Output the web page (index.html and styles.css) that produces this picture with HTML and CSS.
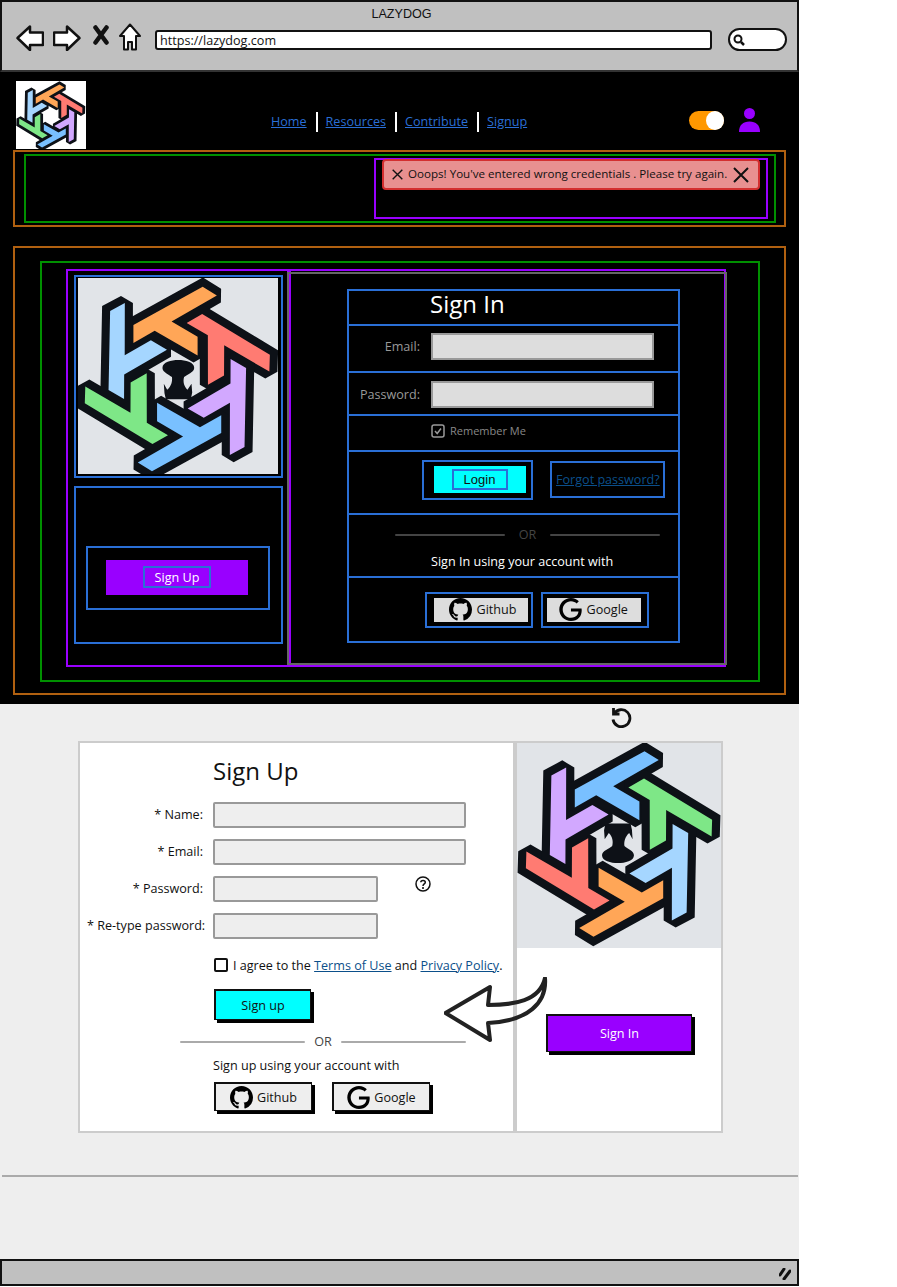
FILE: index.html
```html
<!DOCTYPE html>
<html lang="en">

<head>
    <meta charset="UTF-8">
    <meta name="viewport" content="width=device-width, initial-scale=1.0">
    <title>LAZYDOG</title>
    <link rel="stylesheet" href="styles.css">
</head>

<body>
    <svg class="defs" aria-hidden="true">
        <defs>
            <polygon id="arm" points="-130,-160 75,-273 117,-247 -17,-170 60,-125 60,-70 -67,-143 -130,-107" />
            <symbol id="arms" viewBox="-320 -320 640 640">
                <g fill="#0d1117" stroke="#0d1117" stroke-width="48" stroke-linejoin="miter" stroke-miterlimit="1.9">
                    <use href="#arm" />
                    <use href="#arm" transform="rotate(60)" />
                    <use href="#arm" transform="rotate(120)" />
                    <use href="#arm" transform="rotate(180)" />
                    <use href="#arm" transform="rotate(240)" />
                    <use href="#arm" transform="rotate(300)" />
                </g>
                <use href="#arm" fill="#ffa657" />
                <use href="#arm" fill="#ff7b72" transform="rotate(60)" />
                <use href="#arm" fill="#d2a8ff" transform="rotate(120)" />
                <use href="#arm" fill="#79c0ff" transform="rotate(180)" />
                <use href="#arm" fill="#7ee787" transform="rotate(240)" />
                <use href="#arm" fill="#a5d6ff" transform="rotate(300)" />
            </symbol>
            <symbol id="logo" viewBox="-320 -320 640 640">
                <path fill="#0d1117" d="M-44 -33C-44 -50 -18 -56 3 -56C24 -56 50 -50 50 -33C50 -20 28 -14 20 -6C16 8 20 22 30 32L42 14L44 40L40 60L-34 60L-38 42L-40 14L-30 32C-18 22 -14 6 -16 -6C-24 -14 -44 -20 -44 -33Z" />
                <use href="#arms" x="-320" y="-320" width="640" height="640" />
            </symbol>
            <symbol id="github" viewBox="0 0 16 16">
                <path d="M8 0C3.58 0 0 3.58 0 8c0 3.54 2.29 6.53 5.47 7.59.4.07.55-.17.55-.38 0-.19-.01-.82-.01-1.49-2.01.37-2.53-.49-2.69-.94-.09-.23-.48-.94-.82-1.13-.28-.15-.68-.52-.01-.53.63-.01 1.08.58 1.23.82.72 1.21 1.87.87 2.33.66.07-.52.28-.87.51-1.07-1.78-.2-3.64-.89-3.64-3.95 0-.87.31-1.59.82-2.15-.08-.2-.36-1.02.08-2.12 0 0 .67-.21 2.2.82.64-.18 1.32-.27 2-.27.68 0 1.36.09 2 .27 1.53-1.04 2.2-.82 2.2-.82.44 1.1.16 1.92.08 2.12.51.56.82 1.27.82 2.15 0 3.07-1.87 3.75-3.65 3.95.29.25.54.73.54 1.48 0 1.07-.01 1.93-.01 2.2 0 .21.15.46.55.38A8.013 8.013 0 0016 8c0-4.42-3.58-8-8-8z" />
            </symbol>
            <symbol id="google" viewBox="0 0 24 24">
                <path d="M12.48 10.92v3.28h7.84c-.24 1.84-.853 3.187-1.787 4.133-1.147 1.147-2.933 2.4-6.053 2.4-4.827 0-8.6-3.893-8.6-8.72s3.773-8.72 8.6-8.72c2.6 0 4.507 1.027 5.907 2.347l2.307-2.307C18.747 1.44 16.133 0 12.48 0 5.867 0 .307 5.387.307 12s5.56 12 12.173 12c3.573 0 6.267-1.173 8.373-3.36 2.16-2.16 2.84-5.213 2.84-7.667 0-.76-.053-1.467-.173-2.053H12.48z" />
            </symbol>
            <symbol id="cross" viewBox="0 0 16 16">
                <path d="M1 1L15 15M15 1L1 15" fill="none" stroke="#111" stroke-width="2" />
            </symbol>
        </defs>
    </svg>

    <div class="page">
        <div class="topbar">
            <div class="window-title">LAZYDOG</div>
            <div class="toolbar">
                <svg class="tool tool-back" viewBox="0 0 28 26"><path d="M1.500 13L14 1.500V7.500H27V20H14V25Z" fill="#fff" stroke="#111" stroke-width="2.500" stroke-linejoin="round" /></svg>
                <svg class="tool tool-forward" viewBox="0 0 28 26"><path d="M26.500 13L14 1.500V7.500H1V20H14V25Z" fill="#fff" stroke="#111" stroke-width="2.500" stroke-linejoin="round" /></svg>
                <svg class="tool tool-stop" viewBox="0 0 16 20"><path d="M2.500 2.500L13.500 17.500M13.500 2.500L2.500 17.500" fill="none" stroke="#111" stroke-width="4.500" stroke-linecap="round" /></svg>
                <svg class="tool tool-home" viewBox="0 0 22 28"><path d="M11 1.500L21 13H17V26.500H13V19H9V26.500H5V13H1Z" fill="#fff" stroke="#111" stroke-width="2" stroke-linejoin="round" /></svg>
                <div class="urlbar">https://lazydog.com</div>
                <div class="searchbox">
                    <svg class="search-icon" viewBox="0 0 12 12"><circle cx="5" cy="5" r="3.500" fill="none" stroke="#111" stroke-width="2" /><path d="M8 8L11 11" stroke="#111" stroke-width="2.500" /></svg>
                </div>
            </div>
        </div>

        <div class="dark">
            <header class="site-header">
                <svg class="site-logo" viewBox="-298 -303 600 588"><use href="#arms" x="-320" y="-320" width="640" height="640" /></svg>
                <nav class="site-nav">
                    <a href="#">Home</a>
                    <a href="#">Resources</a>
                    <a href="#">Contribute</a>
                    <a href="#">Signup</a>
                </nav>
                <div class="toggle"><span class="knob"></span></div>
                <svg class="user-icon" viewBox="0 0 21 24">
                    <circle cx="10.500" cy="5.500" r="5.500" />
                    <path d="M0 24C0 17 4 13.500 10.500 13.500S21 17 21 24Z" />
                </svg>
            </header>

            <section class="box-orange banner">
                <div class="box-green banner-inner">
                    <div class="box-purple banner-col">
                        <div class="alert">
                            <svg class="alert-x"><use href="#cross" /></svg>
                            <span class="alert-text">Ooops! You've entered wrong credentials . Please try again.</span>
                            <svg class="alert-close"><use href="#cross" /></svg>
                        </div>
                    </div>
                </div>
            </section>

            <section class="box-orange main-box">
                <div class="box-green main-inner">
                    <div class="auth-grid">
                        <div class="box-purple auth-left">
                            <div class="box-blue logo-frame">
                                <svg class="big-logo" viewBox="-294 -299 592 580"><use href="#logo" x="-320" y="-320" width="640" height="640" /></svg>
                            </div>
                            <div class="box-blue cta-outer">
                                <div class="box-blue cta-inner">
                                    <div class="cta-btn"><span class="box-blue cta-label">Sign Up</span></div>
                                </div>
                            </div>
                        </div>
                        <div class="box-purple auth-right">
                            <div class="box-blue signin">
                                <div class="si-row si-title">Sign In</div>
                                <div class="si-row si-email">
                                    <label class="si-label">Email:</label>
                                    <div class="si-input"></div>
                                </div>
                                <div class="si-row si-pass">
                                    <label class="si-label">Password:</label>
                                    <div class="si-input"></div>
                                </div>
                                <div class="si-row si-remember">
                                    <svg class="si-check" viewBox="0 0 14 14">
                                        <rect x="1" y="1" width="12" height="12" rx="2" fill="none" stroke="#999" stroke-width="1.500" />
                                        <path d="M4 7L6.200 9.500L10 4.500" fill="none" stroke="#999" stroke-width="1.500" />
                                    </svg>
                                    <span>Remember Me</span>
                                </div>
                                <div class="si-row si-actions">
                                    <div class="box-blue login-box">
                                        <div class="login-btn"><span class="box-blue login-label">Login</span></div>
                                    </div>
                                    <div class="box-blue forgot-box"><a href="#">Forgot password?</a></div>
                                </div>
                                <div class="si-row si-alt">
                                    <div class="or-line si-or"><span>OR</span></div>
                                    <div class="si-using">Sign In using your account with</div>
                                </div>
                                <div class="si-row si-social">
                                    <div class="box-blue social-box">
                                        <div class="social-btn social-github"><svg class="social-icon"><use href="#github" /></svg>Github</div>
                                    </div>
                                    <div class="box-blue social-box">
                                        <div class="social-btn social-google"><svg class="social-icon"><use href="#google" /></svg>Google</div>
                                    </div>
                                </div>
                            </div>
                        </div>
                    </div>
                </div>
            </section>
        </div>

        <div class="light">
            <div class="undo-row">
                <svg class="undo-icon" viewBox="0 0 24 24"><path d="M5.500 4V10H11.500M6 10A8.500 8.500 0 1 1 5 15.500" fill="none" stroke="#111" stroke-width="2.800" /></svg>
            </div>
            <div class="cards">
                <div class="card su-card">
                    <h2 class="su-title">Sign Up</h2>
                    <div class="su-row"><label class="su-label">* Name:</label><div class="su-input"></div></div>
                    <div class="su-row"><label class="su-label">* Email:</label><div class="su-input"></div></div>
                    <div class="su-row">
                        <label class="su-label">* Password:</label><div class="su-input su-input-short"></div>
                        <svg class="help-icon" viewBox="0 0 16 16">
                            <circle cx="8" cy="8" r="7" fill="none" stroke="#111" stroke-width="1.500" />
                            <path d="M5.800 6.200C5.800 3.800 10.300 3.800 10.300 6.200C10.300 8 8 7.800 8 10" fill="none" stroke="#111" stroke-width="1.500" />
                            <circle cx="8" cy="12" r="1" />
                        </svg>
                    </div>
                    <div class="su-row"><label class="su-label su-label-wide">* Re-type password:</label><div class="su-input su-input-short"></div></div>
                    <div class="su-agree">
                        <span class="su-check"></span>
                        <span>I agree to the <a href="#">Terms of Use</a> and <a href="#">Privacy Policy</a>.</span>
                    </div>
                    <div class="su-btn">Sign up</div>
                    <div class="or-line su-or"><span>OR</span></div>
                    <div class="su-using">Sign up using your account with</div>
                    <div class="su-social">
                        <div class="su-social-btn"><svg class="su-social-icon"><use href="#github" /></svg>Github</div>
                        <div class="su-social-btn"><svg class="su-social-icon"><use href="#google" /></svg>Google</div>
                    </div>
                </div>
                <div class="card side-card">
                    <svg class="side-logo" viewBox="-300 -297 600 603"><g transform="rotate(180)"><use href="#logo" x="-320" y="-320" width="640" height="640" /></g></svg>
                    <div class="side-btn">Sign In</div>
                </div>
                <svg class="swap-arrow" viewBox="0 0 104 66">
                    <path d="M1.500 36L46 10L44 28C70 28 96 24 101 1C103 26 84 44 44 46L46 63Z" fill="none" stroke="#222" stroke-width="4" stroke-linejoin="round" />
                </svg>
            </div>
            <div class="page-rule"></div>
        </div>

        <div class="statusbar">
            <svg class="grip" viewBox="0 0 12 12"><path d="M1 7L5 1M5 11L11 3" fill="none" stroke="#111" stroke-width="3" stroke-linecap="round" /></svg>
        </div>
    </div>
</body>

</html>
```

FILE: styles.css
```css
* {
    box-sizing: border-box;
}

body {
    margin: 0;
    background-color: #fff;
    font-family: 'Open Sans', 'Noto Sans', sans-serif;
    font-size: 12.6px;
    color: #111;
}

.defs {
    display: none;
}

.page {
    width: 799px;
}

/* browser chrome */
.topbar {
    height: 72px;
    padding: 5px 10px 0 14px;
    background-color: #c0c0c0;
    border: 2px solid #111;
    border-bottom-color: #333;
}

.window-title {
    font-family: 'Liberation Sans', sans-serif;
    font-size: 12.6px;
    line-height: 14px;
    text-align: center;
}

.toolbar {
    display: flex;
    align-items: center;
    height: 29px;
    margin-top: 2px;
}

.tool {
    flex: none;
}

.tool-back,
.tool-forward {
    width: 28px;
    height: 26px;
}

.tool-forward {
    margin-left: 9px;
}

.tool-stop {
    width: 16px;
    height: 20px;
    margin-left: 12px;
    margin-top: -5px;
}

.tool-home {
    width: 22px;
    height: 28px;
    margin-left: 10px;
    margin-top: -2px;
}

.urlbar {
    width: 557px;
    height: 20px;
    margin-left: 14px;
    margin-top: 4px;
    padding-left: 3px;
    background-color: #fff;
    border: 2px solid #111;
    border-radius: 3px;
    line-height: 17px;
}

.searchbox {
    display: flex;
    align-items: center;
    width: 59px;
    height: 23px;
    margin-left: 16px;
    margin-top: 4px;
    padding-left: 3px;
    background-color: #fff;
    border: 2px solid #111;
    border-radius: 12px;
}

.search-icon {
    width: 12px;
    height: 12px;
}

/* dark part */
.dark {
    padding: 9px 13px;
    background-color: #000;
}

.site-header {
    display: flex;
    align-items: flex-start;
    height: 68px;
    padding: 0 26px 0 3px;
}

.site-logo {
    flex: none;
    width: 70px;
    height: 68px;
    background-color: #fff;
}

.site-nav {
    display: flex;
    align-items: center;
    height: 20px;
    margin-left: 185px;
    margin-top: 31px;
}

.site-nav a {
    padding-right: 9px;
    margin-right: 8px;
    border-right: 2px solid #fff;
    color: #2a6fd6;
    line-height: 20px;
}

.site-nav a:last-child {
    padding-right: 0;
    margin-right: 0;
    border-right: 0;
}

.toggle {
    display: flex;
    justify-content: flex-end;
    width: 35px;
    height: 19px;
    margin-left: auto;
    margin-top: 30px;
    background-color: #ff9800;
    border-radius: 10px;
}

.knob {
    width: 18px;
    height: 19px;
    background-color: #fff;
    border-radius: 50%;
}

.user-icon {
    width: 21px;
    height: 24px;
    margin-left: 15px;
    margin-top: 27px;
    fill: #9900ff;
}

/* sketch boxes */
.box-orange {
    border: 2px solid #b06010;
}

.box-green {
    border: 2px solid #009000;
}

.box-purple {
    border: 2px solid #9900ff;
}

.box-blue {
    border: 2px solid #2a6fd6;
}

.banner {
    height: 77px;
    margin-top: 1px;
    padding: 2px 8px 2px 9px;
}

.banner-inner {
    display: flex;
    justify-content: flex-end;
    height: 69px;
    padding: 2px 6px 2px 0;
}

.banner-col {
    width: 394px;
}

.alert {
    display: flex;
    align-items: center;
    height: 31px;
    margin: -1px 6px 0;
    padding: 0 9px 0 8px;
    background-color: #e89090;
    border: 2px solid #d32f2f;
    border-radius: 4px;
    font-size: 11.6px;
}

.alert-x {
    flex: none;
    width: 11px;
    height: 11px;
}

.alert-text {
    margin-left: 5px;
    margin-top: -3px;
    white-space: nowrap;
}

.alert-close {
    flex: none;
    width: 16px;
    height: 16px;
    margin-left: auto;
}

.main-box {
    height: 449px;
    margin-top: 19px;
    padding: 13px 24px 11px 25px;
}

.main-inner {
    height: 421px;
    padding: 6px 32px 13px 24px;
}

.auth-grid {
    display: grid;
    grid-template-columns: 223px 437px;
    height: 398px;
}

.auth-left {
    padding: 4px 4px 0 6px;
}

.logo-frame {
    width: 209px;
    height: 203px;
    padding: 1px 2px;
}

.big-logo {
    display: block;
    width: 200px;
    height: 196px;
    background-color: #e1e4e8;
}

.cta-outer {
    width: 209px;
    height: 158px;
    margin-top: 8px;
    padding: 58px 11px 0 10px;
}

.cta-inner {
    display: flex;
    align-items: center;
    justify-content: center;
    height: 64px;
}

.cta-btn {
    display: flex;
    align-items: center;
    justify-content: center;
    width: 142px;
    height: 35px;
    margin: -2px 0 0 -2px;
    background-color: #9900ff;
}

.cta-label {
    width: 68px;
    height: 22px;
    color: #fff;
    line-height: 20px;
    text-align: center;
}

.auth-right {
    position: relative;
    padding: 18px 0 0 56px;
}

/* grey outline that sits a little off the purple one */
.auth-right::before {
    content: "";
    position: absolute;
    inset: 1px -3px 0 -4px;
    border: 2px solid #666;
    pointer-events: none;
}

.signin {
    width: 333px;
    height: 354px;
}

.si-row {
    display: flex;
    align-items: center;
    border-bottom: 2px solid #2a6fd6;
}

.si-row:last-child {
    border-bottom: 0;
}

.si-title {
    height: 35px;
    padding: 0 0 8px 81px;
    color: #fff;
    font-size: 24px;
}

.si-email {
    height: 47px;
    padding-bottom: 4px;
}

.si-pass {
    height: 43px;
    padding-top: 2px;
}

.si-label {
    width: 71px;
    color: #999;
    text-align: right;
    white-space: nowrap;
}

.si-input {
    width: 223px;
    height: 27px;
    margin-left: 11px;
    background-color: #ddd;
    border: 2px solid #999;
}

.si-remember {
    height: 36px;
    padding: 0 0 5px 82px;
    color: #888;
    font-size: 11px;
}

.si-check {
    width: 14px;
    height: 14px;
    margin-right: 5px;
}

.si-actions {
    height: 63px;
    padding: 0 0 6px 73px;
}

.login-box {
    display: flex;
    align-items: center;
    justify-content: center;
    width: 111px;
    height: 40px;
}

.login-btn {
    display: flex;
    align-items: center;
    justify-content: center;
    width: 92px;
    height: 27px;
    margin-left: 4px;
    background-color: #00ffff;
}

.login-label {
    width: 56px;
    height: 21px;
    font-family: 'Liberation Sans', sans-serif;
    font-size: 13px;
    line-height: 17px;
    text-align: center;
}

.forgot-box {
    display: flex;
    align-items: center;
    width: 115px;
    height: 37px;
    margin-left: 17px;
    padding-left: 4px;
    white-space: nowrap;
}

.forgot-box a {
    color: #0b4f8a;
}

.si-alt {
    display: block;
    height: 63px;
    padding-top: 11px;
}

.or-line {
    display: flex;
    align-items: center;
}

.or-line::before,
.or-line::after {
    content: "";
    flex: 1;
    height: 2px;
    border-radius: 2px;
}

.si-or {
    width: 265px;
    margin-left: 46px;
    gap: 14px;
    color: #444;
}

.si-or::before,
.si-or::after {
    background-color: #444;
}

.si-using {
    margin-top: 10px;
    padding-left: 82px;
    color: #fff;
}

.si-social {
    height: 63px;
    padding-left: 76px;
    gap: 8px;
}

.social-box {
    display: flex;
    align-items: center;
    justify-content: center;
    width: 108px;
    height: 36px;
}

.social-btn {
    display: flex;
    align-items: center;
    flex: none;
    gap: 5px;
    width: 94px;
    height: 24px;
    background-color: #ddd;
}

.social-github {
    margin-left: 3px;
    padding-left: 15px;
}

.social-google {
    margin-left: -3px;
    padding-left: 12px;
}

.social-icon {
    width: 23px;
    height: 23px;
}

/* light part */
.light {
    height: 555px;
    background-color: #eee;
}

.undo-row {
    height: 37px;
    padding: 0 0 0 608px;
}

.undo-icon {
    display: block;
    width: 24px;
    height: 24px;
}

.cards {
    position: relative;
    display: grid;
    grid-template-columns: 437px 208px;
    height: 392px;
    margin-left: 78px;
}

.card {
    background-color: #fff;
    border: 2px solid #ccc;
}

.su-card {
    padding: 14px 0 0 133px;
}

.su-title {
    margin: 0 0 17px;
    font-size: 24px;
    font-weight: 400;
    line-height: 28px;
}

.su-row {
    display: flex;
    align-items: center;
    height: 26px;
    margin: 0 0 11px -123px;
}

.su-label {
    flex: none;
    width: 123px;
    padding: 0 10px 2px 0;
    text-align: right;
    white-space: nowrap;
}

.su-label-wide {
    width: 126px;
    margin-left: -3px;
    padding-right: 8px;
}

.su-input {
    width: 253px;
    height: 26px;
    background-color: #eee;
    border: 2px solid #999;
    border-radius: 2px;
}

.su-input-short {
    width: 165px;
}

.help-icon {
    width: 16px;
    height: 16px;
    margin-left: 37px;
    margin-top: -10px;
}

.su-agree {
    display: flex;
    align-items: center;
    gap: 5px;
    margin-top: 19px;
    padding-left: 1px;
    height: 14px;
    white-space: nowrap;
}

.su-agree a {
    color: #0b4f8a;
}

.su-check {
    flex: none;
    width: 14px;
    height: 14px;
    border: 2px solid #111;
    border-radius: 2px;
}

.su-btn {
    display: flex;
    align-items: center;
    justify-content: center;
    width: 97px;
    height: 31px;
    margin: 17px 0 0 1px;
    background-color: #00ffff;
    border: 2px solid #111;
    border-right-width: 1px;
    border-bottom-width: 1px;
    box-shadow: 3px 3px 0 #000;
}

.su-or {
    width: 286px;
    margin: 13px 0 0 -33px;
    gap: 9px;
    color: #444;
}

.su-or::before,
.su-or::after {
    background-color: #aaa;
}

.su-using {
    margin-top: 7px;
}

.su-social {
    display: flex;
    gap: 20px;
    margin: 8px 0 0 1px;
}

.su-social-btn {
    display: flex;
    align-items: center;
    justify-content: center;
    gap: 4px;
    width: 98px;
    height: 29px;
    background-color: #eee;
    border: 2px solid #111;
    border-right-width: 1px;
    border-bottom-width: 1px;
    box-shadow: 3px 3px 0 #000;
}

.su-social-icon {
    width: 23px;
    height: 23px;
}

.side-logo {
    display: block;
    width: 204px;
    height: 205px;
    background-color: #e1e4e8;
}

.side-btn {
    display: flex;
    align-items: center;
    justify-content: center;
    width: 146px;
    height: 38px;
    margin: 66px 0 0 29px;
    background-color: #9900ff;
    border: 2px solid #111;
    border-right-width: 1px;
    border-bottom-width: 1px;
    box-shadow: 3px 3px 0 #000;
    color: #fff;
}

.swap-arrow {
    position: absolute;
    left: 366px;
    top: 236px;
    width: 104px;
    height: 66px;
}

.page-rule {
    height: 2px;
    margin: 42px 1px 0 2px;
    background-color: #aaa;
}

.statusbar {
    display: flex;
    align-items: center;
    justify-content: flex-end;
    height: 27px;
    padding-right: 6px;
    background-color: #c0c0c0;
    border: 2px solid #111;
}

.grip {
    width: 12px;
    height: 12px;
    margin-top: 3px;
}
```
